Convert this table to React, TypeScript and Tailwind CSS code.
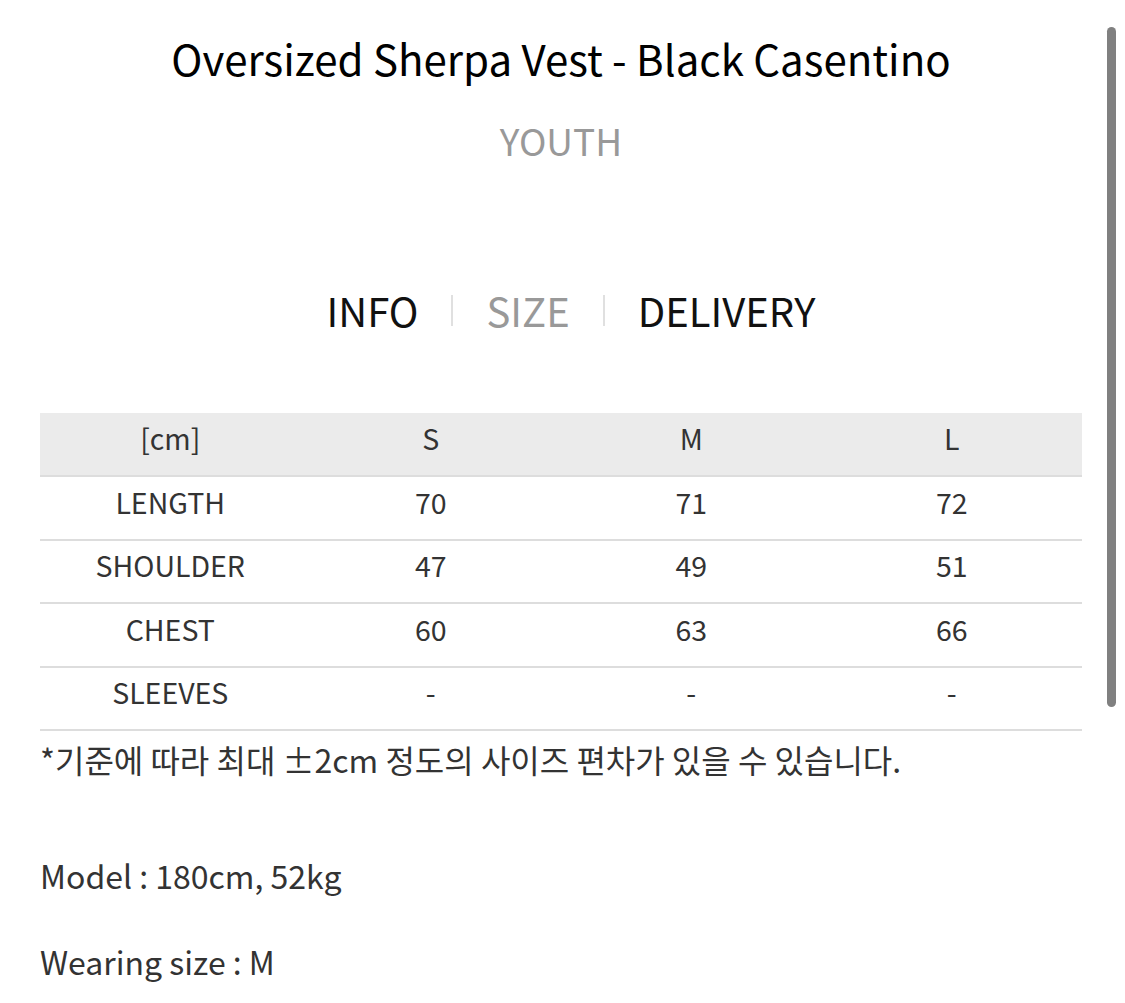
const rows = [
  { label: "LENGTH", s: "70", m: "71", l: "72" },
  { label: "SHOULDER", s: "47", m: "49", l: "51" },
  { label: "CHEST", s: "60", m: "63", l: "66" },
  { label: "SLEEVES", s: "-", m: "-", l: "-" },
];

export default function App() {
  return (
    <div
      className="relative w-[1125px] h-[1003px] overflow-hidden bg-white text-[#222]"
      style={{ fontFamily: '"Noto Sans CJK KR", "Noto Sans", sans-serif' }}
    >
      {/* scrollbar */}
      <div className="absolute right-[9px] top-[27px] h-[680px] w-[9px] rounded-full bg-[#808080]" />

      <div className="pt-[28px] pl-[40px] pr-[43px]">
        <h1 className="text-center text-[42px] leading-[60px] text-black">
          Oversized Sherpa Vest - Black Casentino
        </h1>
        <p className="mt-[27px] text-center text-[37px] leading-[50px] text-[#999]">YOUTH</p>

        {/* tabs */}
        <div className="mt-[115px] pl-[20px] flex items-center justify-center text-[40px] leading-[60px]">
          <span className="text-[#111]">INFO</span>
          <span className="mx-[33px] h-[31px] w-[2px] bg-[#e0e0e0]" />
          <span className="text-[#999]">SIZE</span>
          <span className="mx-[33px] h-[31px] w-[2px] bg-[#e0e0e0]" />
          <span className="text-[#111]">DELIVERY</span>
        </div>

        {/* size table */}
        <div className="mt-[73px] text-[28.5px] text-[#333]">
          <div className="grid grid-cols-4 h-[64px] pb-[12px] items-center bg-[#ebebeb] text-center border-b-2 border-[#ddd]">
            <span>[cm]</span>
            <span>S</span>
            <span>M</span>
            <span>L</span>
          </div>
          {rows.map((r) => (
            <div
              key={r.label}
              className="grid grid-cols-4 h-[63.5px] pb-[11px] items-center text-center border-b-2 border-[#ddd]"
            >
              <span>{r.label}</span>
              <span>{r.s}</span>
              <span>{r.m}</span>
              <span>{r.l}</span>
            </div>
          ))}
        </div>

        <p className="mt-[5px] text-[32px] leading-[46px] text-[#333]">
          *기준에 따라 최대 ±2cm 정도의 사이즈 편차가 있을 수 있습니다.
        </p>

        <p className="mt-[70px] text-[32px] leading-[46px] text-[#333]">Model : 180cm, 52kg</p>
        <p className="mt-[40px] text-[32px] leading-[46px] text-[#333]">Wearing size : M</p>
      </div>
    </div>
  );
}
